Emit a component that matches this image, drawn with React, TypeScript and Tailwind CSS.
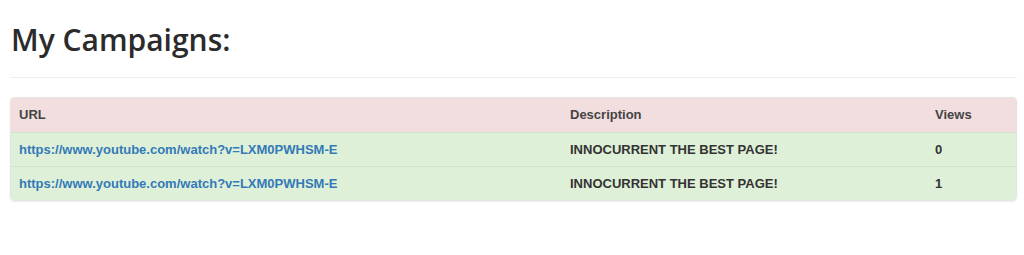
export default function App() {
  const rows = [
    { url: "https://www.youtube.com/watch?v=LXM0PWHSM-E", desc: "INNOCURRENT THE BEST PAGE!", views: "0" },
    { url: "https://www.youtube.com/watch?v=LXM0PWHSM-E", desc: "INNOCURRENT THE BEST PAGE!", views: "1" },
  ];
  return (
    <div className="bg-white w-[1024px] h-[255px] px-[10px] pt-[20px]">
      <h1
        className="text-[30px] leading-[40px] font-semibold text-[#2b2b2b] pl-[1px]"
        style={{ fontFamily: '"Open Sans", sans-serif' }}
      >
        My Campaigns:
      </h1>
      <hr className="mt-[17px] mb-[19px] border-0 border-t border-[#eeeeee] w-[1007px]" />
      <div
        className="w-[1007px] rounded-[4px] overflow-hidden border border-[#e4e4e4] shadow-[0_1px_2px_rgba(0,0,0,0.08)] text-[13px] font-bold text-[#333]"
        style={{ fontFamily: '"Liberation Sans", Arial, sans-serif' }}
      >
        <div className="flex h-[34px] items-center bg-[#f2dede] text-[#444]">
          <div className="w-[551px] pl-[8px]">URL</div>
          <div className="w-[365px] pl-[8px]">Description</div>
          <div className="flex-1 pl-[8px]">Views</div>
        </div>
        {rows.map((r, i) => (
          <div key={i} className="flex h-[34px] items-center bg-[#dff0d8] border-t border-[#d0e3c8]">
            <div className="w-[551px] pl-[8px] text-[#337ab7]">{r.url}</div>
            <div className="w-[365px] pl-[8px]">{r.desc}</div>
            <div className="flex-1 pl-[8px]">{r.views}</div>
          </div>
        ))}
      </div>
    </div>
  );
}
